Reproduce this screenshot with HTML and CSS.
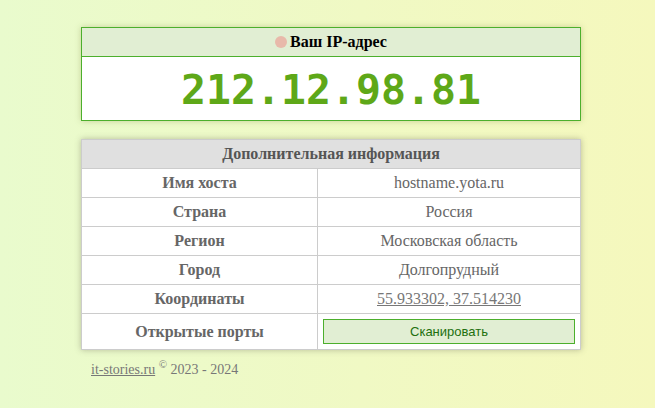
FILE: index.html
```html
<!DOCTYPE html>
<html lang="ru">
<head>
<meta charset="utf-8">
<title>Ваш IP-адрес</title>
<link rel="stylesheet" href="styles.css">
</head>
<body>
<div class="wrap">
  <section class="ipbox">
    <div class="ipbox-head"><span class="dot"></span>Ваш IP-адрес</div>
    <div class="ipbox-value">212.12.98.81</div>
  </section>

  <table class="info">
    <thead>
      <tr><th colspan="2">Дополнительная информация</th></tr>
    </thead>
    <tbody>
      <tr><td class="lbl">Имя хоста</td><td class="val">hostname.yota.ru</td></tr>
      <tr><td class="lbl">Страна</td><td class="val">Россия</td></tr>
      <tr><td class="lbl">Регион</td><td class="val">Московская область</td></tr>
      <tr><td class="lbl">Город</td><td class="val">Долгопрудный</td></tr>
      <tr><td class="lbl">Координаты</td><td class="val"><a href="#">55.933302, 37.514230</a></td></tr>
      <tr class="last"><td class="lbl">Открытые порты</td><td class="val btncell"><button class="scan">Сканировать</button></td></tr>
    </tbody>
  </table>

  <footer class="foot"><a href="#">it-stories.ru</a> <sup>©</sup> 2023 - 2024</footer>
</div>
</body>
</html>
```

FILE: styles.css
```css
html, body {
  margin: 0;
  padding: 0;
  height: 100%;
}
body {
  background: linear-gradient(to right, #e9fbcd 0%, #f0f9c4 55%, #f5f8bd 100%);
  font-family: "Liberation Serif", "Times New Roman", serif;
}
.wrap {
  width: 500px;
  margin-left: 81px;
  padding-top: 27px;
}
.ipbox {
  border: 1px solid #4caf2c;
  background: #fff;
  box-shadow: 0 0 6px rgba(120, 130, 60, 0.35);
}
.ipbox-head {
  background: #e1eed3;
  height: 28px;
  border-bottom: 1px solid #4caf2c;
  display: flex;
  align-items: center;
  justify-content: center;
  font-weight: bold;
  font-size: 16px;
  color: #000;
}
.dot {
  display: inline-block;
  width: 12px;
  height: 12px;
  border-radius: 50%;
  background: #e8b9aa;
  margin-right: 3px;
}
.ipbox-value {
  height: 63px;
  display: flex;
  align-items: center;
  justify-content: center;
  padding-top: 2px;
  box-sizing: border-box;
  font-family: "DejaVu Sans Mono", monospace;
  font-weight: bold;
  font-size: 41.5px;
  color: #5ea818;
}
.info {
  width: 500px;
  margin-top: 18px;
  border-collapse: collapse;
  background: #fff;
  box-shadow: 0 0 6px rgba(110, 110, 90, 0.45);
  font-size: 16px;
  color: #666;
}
.info th {
  background: #e0e0e0;
  color: #555;
  height: 28px;
  padding: 0;
  font-weight: bold;
  border: 1px solid #ccc;
}
.info td {
  height: 28px;
  padding: 0;
  text-align: center;
  border: 1px solid #ccc;
}
.info td.lbl {
  width: 235px;
  font-weight: bold;
  color: #666;
}
.info td.val a {
  color: #777;
  text-decoration: underline;
}
.info tr.last td {
  height: 35px;
}
.btncell {
  padding: 0 5px !important;
}
.scan {
  display: block;
  width: 100%;
  height: 25px;
  background: #e1eed3;
  border: 1px solid #4caf2c;
  color: #22700e;
  font-family: "Liberation Sans", Arial, sans-serif;
  font-size: 13px;
  cursor: pointer;
}
.foot {
  padding-left: 10px;
  margin-top: 8px;
  font-size: 14px;
  color: #777;
}
.foot a {
  color: #777;
}
.foot sup {
  font-size: 11px;
}
```
